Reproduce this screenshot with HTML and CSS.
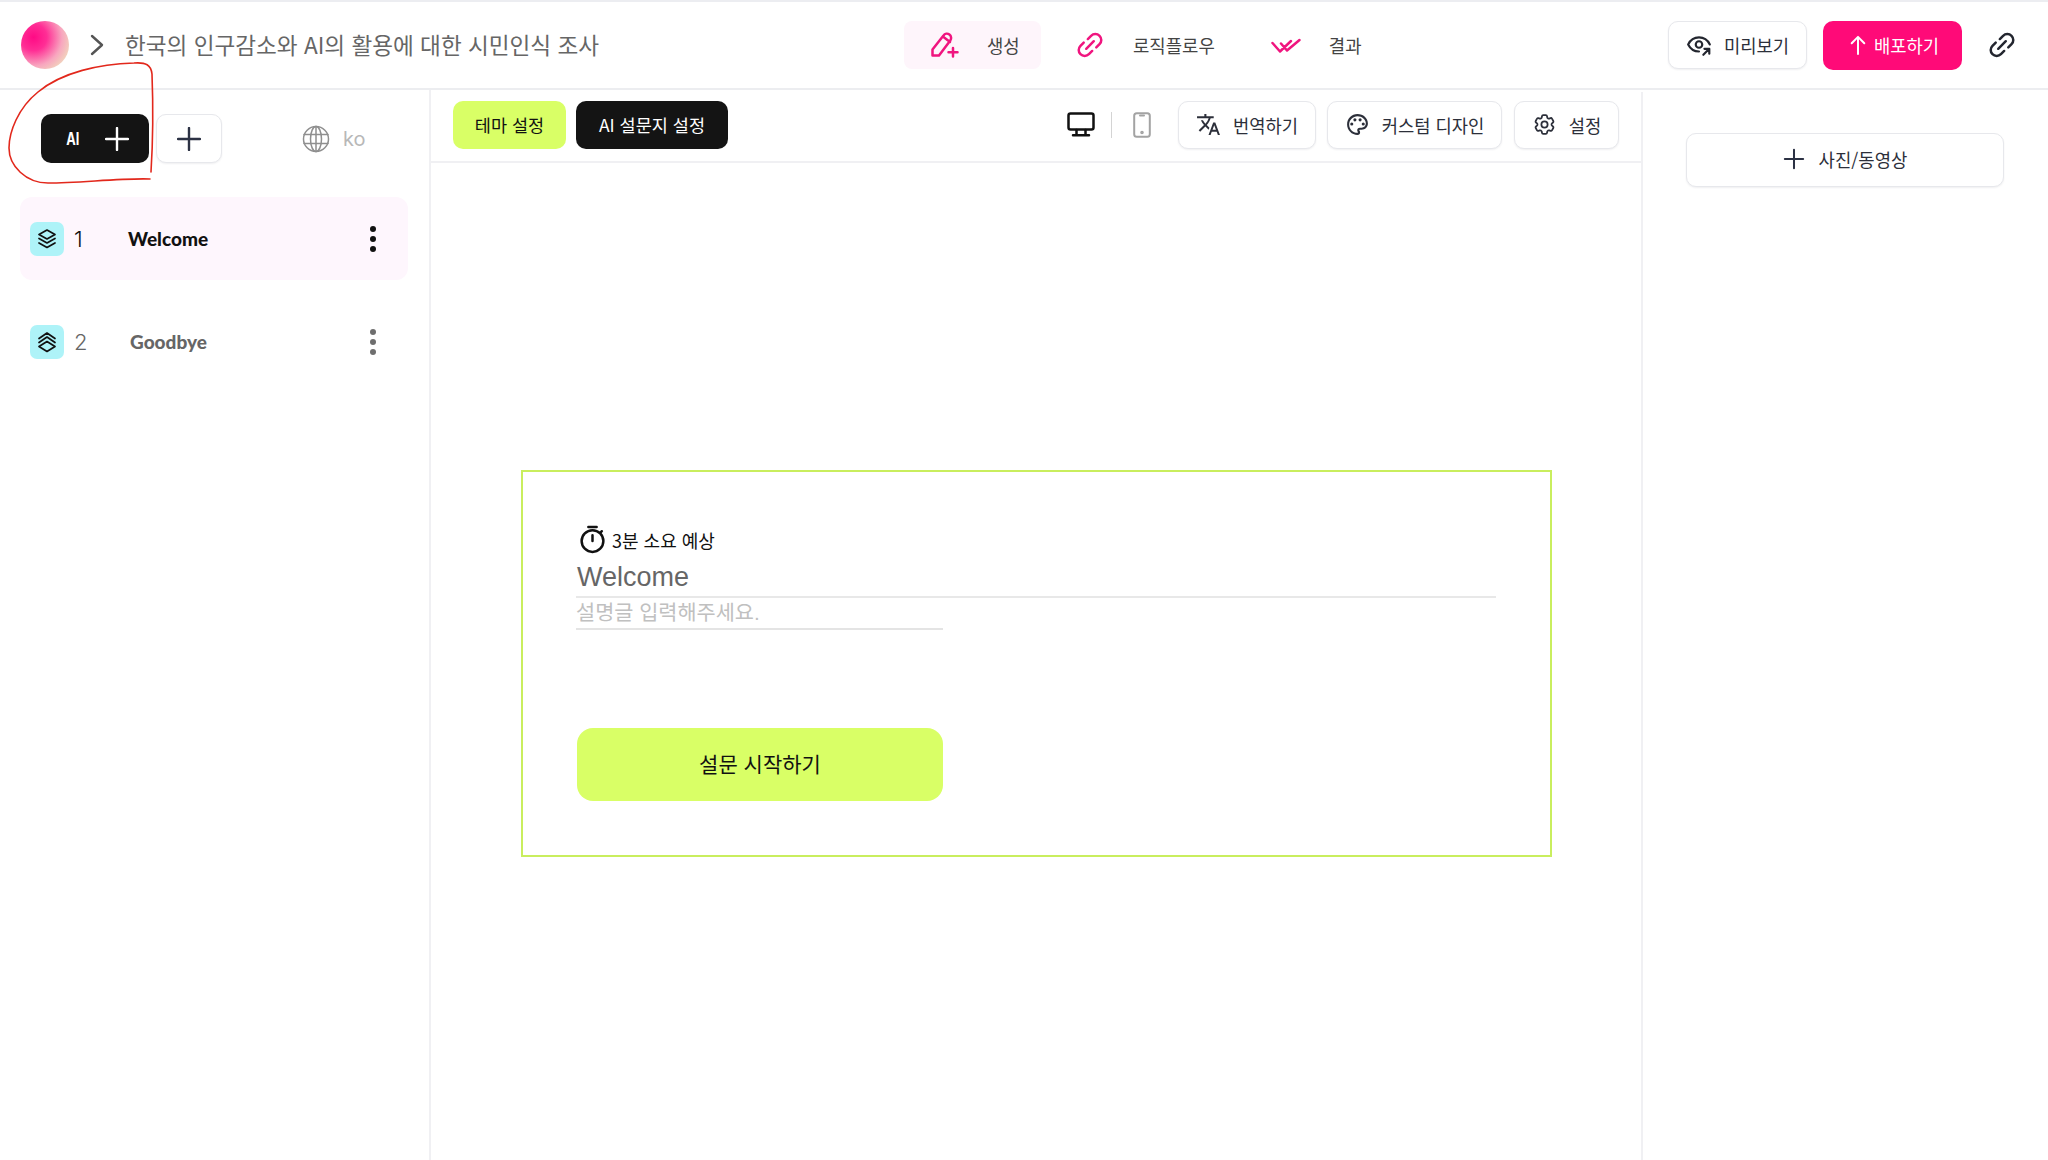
FILE: index.html
```html
<!DOCTYPE html>
<html lang="ko">
<head>
<meta charset="utf-8">
<title>설문 편집</title>
<link rel="stylesheet" href="styles.css">
</head>
<body>
<div class="app">
  <header class="topbar">
    <div class="brand">
      <div class="logo"></div>
      <svg class="chev" viewBox="0 0 14 24"><path d="M2 3l10 9-10 9"/></svg>
      <div class="title">한국의 인구감소와 AI의 활용에 대한 시민인식 조사</div>
    </div>
    <nav class="steps">
      <a class="step step-create">
        <svg class="ico-pencil" viewBox="0 0 28 26"><path d="M2 23.500V17.500L13 3.500a4.200 4.200 0 0 1 6.800 5L8.500 23.500zM13 5l6.500 5"/><path d="M22.500 16v8.500M18 20.200h9"/></svg>
        <span>생성</span>
      </a>
      <a class="step step-logic">
        <svg class="ico-link" viewBox="0 0 24 24"><path d="M10 6.500l3-3a5.500 5.500 0 0 1 7.800 7.800l-3 3M14 17.500l-3 3a5.500 5.500 0 0 1-7.800-7.800l3-3M8.500 15.500l7-7"/></svg>
        <span>로직플로우</span>
      </a>
      <a class="step step-result">
        <svg class="ico-check" viewBox="0 0 30 15"><path d="M1.500 5l7.500 8.500L20 3M10 5.500l6 7L28.500 2"/></svg>
        <span>결과</span>
      </a>
    </nav>
    <div class="actions">
      <button class="btn btn-preview">
        <svg class="ico-eye" viewBox="0 0 24 24"><path d="M2 11.500C4 7.500 7.500 5 12 5s8 2.500 10 6.500M2 11.500c2 4 5.500 6.500 10 6.500"/><circle cx="12" cy="11.500" r="3"/><path d="M16 21l5.500-5.500M17 15.500h4.500V20"/></svg>
        <span>미리보기</span>
      </button>
      <button class="btn-deploy">
        <svg class="ico-up" viewBox="0 0 20 24"><path d="M10 22V3M3 10l7-7 7 7"/></svg>
        <span>배포하기</span>
      </button>
      <svg class="ico-share" viewBox="0 0 24 24"><path d="M10 6.500l3-3a5.500 5.500 0 0 1 7.800 7.800l-3 3M14 17.500l-3 3a5.500 5.500 0 0 1-7.800-7.800l3-3M8.500 15.500l7-7"/></svg>
    </div>
  </header>

  <div class="workspace">
    <aside class="sidebar">
      <div class="side-top">
        <button class="btn-ai"><span class="ai-label">AI</span><svg class="ico-plus" viewBox="0 0 24 24"><path d="M12 1v22M1 12h22"/></svg></button>
        <button class="btn-add"><svg class="ico-plus" viewBox="0 0 24 24"><path d="M12 1v22M1 12h22"/></svg></button>
        <div class="lang">
          <svg class="ico-globe" viewBox="0 0 28 28"><circle cx="14" cy="14" r="12.500"/><ellipse cx="14" cy="14" rx="5.500" ry="12.500"/><path d="M14 1.500v25M2 9.500h24M2 18.500h24"/></svg>
          <span>ko</span>
        </div>
      </div>
      <ul class="pages">
        <li class="page page-active">
          <div class="badge"><svg viewBox="0 0 22 22"><path d="M11 2l8 4.500-8 4.500-8-4.500zM3 10.500l8 4.500 8-4.500M3 15l8 4.500 8-4.500"/></svg></div>
          <span class="num">1</span>
          <span class="page-name">Welcome</span>
          <span class="dots"><i></i><i></i><i></i></span>
        </li>
        <li class="page page-idle">
          <div class="badge"><svg viewBox="0 0 22 22"><path d="M3 7.500L11 2l8 5.500M3 11.500L11 6l8 5.500M11 10.500l8 5-8 5-8-5z"/></svg></div>
          <span class="num">2</span>
          <span class="page-name">Goodbye</span>
          <span class="dots"><i></i><i></i><i></i></span>
        </li>
      </ul>
    </aside>

    <main class="center">
      <div class="toolbar">
        <button class="btn-theme">테마 설정</button>
        <button class="btn-aiset">AI 설문지 설정</button>
        <div class="tools">
          <svg class="ico-monitor" viewBox="0 0 28 25"><rect x="1.500" y="1.500" width="25" height="16" rx="2"/><path d="M9.500 18v5M18.500 18v5M6 23.200h16"/></svg>
          <div class="tool-div"></div>
          <svg class="ico-phone" viewBox="0 0 18 26"><rect x="1.200" y="1.200" width="15.600" height="23.600" rx="2.500"/><path d="M7 3.500h4"/><circle cx="9" cy="20.500" r=".8"/></svg>
          <button class="btn btn-tool btn-translate">
            <svg class="ico-fill" viewBox="0 0 24 24"><path d="M12.870 15.070l-2.540-2.510.030-.030c1.740-1.940 2.980-4.170 3.710-6.530H17V4h-7V2H8v2H1v1.990h11.170C11.500 7.920 10.440 9.750 9 11.350 8.070 10.320 7.300 9.190 6.690 8h-2c.730 1.630 1.730 3.170 2.980 4.560l-5.090 5.020L4 19l5-5 3.110 3.110.760-2.040zM18.500 10h-2L12 22h2l1.120-3h4.750L21 22h2l-4.500-12zm-2.620 7l1.620-4.330L19.120 17h-3.240z"/></svg>
            <span>번역하기</span>
          </button>
          <button class="btn btn-tool btn-custom">
            <svg class="ico-fill" viewBox="0 0 24 24"><path d="M12 22C6.490 22 2 17.510 2 12S6.490 2 12 2s10 4.040 10 9c0 3.310-2.690 6-6 6h-1.770c-.280 0-.500.220-.500.500 0 .120.050.230.130.330.410.470.640 1.060.640 1.670A2.500 2.500 0 0 1 12 22zm0-18c-4.410 0-8 3.590-8 8s3.590 8 8 8c.280 0 .500-.220.500-.500a.540.540 0 0 0-.140-.350c-.410-.460-.630-1.050-.630-1.650a2.500 2.500 0 0 1 2.500-2.500H16c2.210 0 4-1.790 4-4 0-3.860-3.590-7-8-7z"/><circle cx="6.500" cy="11.500" r="1.500"/><circle cx="9.500" cy="7.500" r="1.500"/><circle cx="14.500" cy="7.500" r="1.500"/><circle cx="17.500" cy="11.500" r="1.500"/></svg>
            <span>커스텀 디자인</span>
          </button>
          <button class="btn btn-tool btn-settings">
            <svg class="ico-tool" viewBox="0 0 24 24"><path d="M9.594 3.940c.090-.542.560-.940 1.110-.940h2.593c.550 0 1.020.398 1.110.940l.213 1.281c.063.374.313.686.645.870.074.040.147.083.220.127.325.196.720.257 1.075.124l1.217-.456a1.125 1.125 0 0 1 1.370.490l1.296 2.247a1.125 1.125 0 0 1-.260 1.431l-1.003.827c-.293.241-.438.613-.430.992a7.723 7.723 0 0 1 0 .255c-.008.378.137.750.430.991l1.004.827c.424.350.534.955.260 1.430l-1.298 2.247a1.125 1.125 0 0 1-1.369.491l-1.217-.456c-.355-.133-.750-.072-1.076.124a6.470 6.470 0 0 1-.220.128c-.331.183-.581.495-.644.869l-.213 1.281c-.090.543-.560.940-1.110.940h-2.594c-.550 0-1.019-.398-1.110-.940l-.213-1.281c-.062-.374-.312-.686-.644-.870a6.520 6.520 0 0 1-.220-.127c-.325-.196-.720-.257-1.076-.124l-1.217.456a1.125 1.125 0 0 1-1.369-.490l-1.297-2.247a1.125 1.125 0 0 1 .260-1.431l1.004-.827c.292-.240.437-.613.430-.991a6.932 6.932 0 0 1 0-.255c.007-.380-.138-.751-.430-.992l-1.004-.827a1.125 1.125 0 0 1-.260-1.430l1.297-2.247a1.125 1.125 0 0 1 1.370-.491l1.216.456c.356.133.751.072 1.076-.124.072-.044.146-.086.220-.128.332-.183.582-.495.644-.869l.214-1.280Z"/><circle cx="12" cy="12" r="3"/></svg>
            <span>설정</span>
          </button>
        </div>
      </div>
      <div class="canvas">
        <section class="card">
          <div class="eta">
            <svg class="ico-timer" viewBox="0 0 24 28"><path d="M8 2h8M12 10v5.500M19.500 7.500l1.500-1.500"/><circle cx="12" cy="15.500" r="10.500"/></svg>
            <span>3분 소요 예상</span>
          </div>
          <div class="card-title">Welcome</div>
          <div class="card-desc">설명글 입력해주세요.</div>
          <button class="btn-start">설문 시작하기</button>
        </section>
      </div>
    </main>

    <aside class="rightbar">
      <button class="btn btn-media">
        <svg class="ico-plus-sm" viewBox="0 0 24 24"><path d="M12 2v20M2 12h20"/></svg>
        <span>사진/동영상</span>
      </button>
    </aside>
  </div>
  <svg class="annotation" viewBox="0 0 170 200"><path d="M151 172C153 140 153 100 152 74C151 65 146 62 134 63C100 64 62 72 38 92C18 108 9 132 9 148C9 166 26 183 48 183C80 183 120 178 150 179"/></svg>
</div>
</body>
</html>
```

FILE: styles.css
```css
* { box-sizing: border-box; }
html, body { margin: 0; padding: 0; background: #fff; }
body {
  font-family: "Noto Sans CJK KR", "Noto Sans", sans-serif;
  color: #222;
  width: 2048px;
  height: 1160px;
  overflow: hidden;
}
button { font-family: inherit; cursor: pointer; padding: 0; margin: 0; border: 0; background: none; }
svg { display: block; flex: none; fill: none; stroke-linecap: round; stroke-linejoin: round; }
ul { list-style: none; margin: 0; padding: 0; }

.app { position: relative; width: 2048px; height: 1160px; display: flex; flex-direction: column; border-top: 2px solid #ecedf1; }

/* top bar */
.topbar {
  height: 88px;
  flex: none;
  display: grid;
  grid-template-columns: 904px 458px 1fr;
  align-items: center;
  border-bottom: 2px solid #ecedf0;
}
.brand { display: flex; align-items: center; padding-left: 21px; }
.logo {
  width: 48px; height: 48px; border-radius: 50%;
  background: radial-gradient(circle at 26% 34%, #ff0a85 0%, #ff2e95 28%, #f8a6bf 60%, #efe4bc 88%);
}
.chev { width: 14px; height: 24px; margin-left: 21px; stroke: #555; stroke-width: 2.400; }
.title { margin-left: 21px; font-size: 22.600px; line-height: 32px; color: #666; white-space: nowrap; }

.steps { display: flex; align-items: center; height: 48px; font-size: 17.800px; color: #444; }
.step { display: flex; align-items: center; height: 48px; }
.step-create { width: 137px; padding-left: 26px; background: #fef5fb; border-radius: 8px; }
.step-create span { margin-left: 28px; }
.ico-pencil { width: 29px; height: 26px; stroke: #f0157f; stroke-width: 2.500; }
.step-logic { margin-left: 36px; }
.ico-link { width: 26px; height: 26px; stroke: #f0157f; stroke-width: 2.300; }
.step-logic span { margin-left: 30px; }
.step-result { margin-left: 56px; }
.ico-check { width: 30px; height: 15px; stroke: #f0157f; stroke-width: 2.500; }
.step-result span { margin-left: 28px; }

.actions { display: flex; align-items: center; justify-content: flex-end; padding-right: 33px; }
.btn {
  display: flex; align-items: center; justify-content: center;
  background: #fff; border: 1px solid #e7e8ec; border-radius: 10px;
  box-shadow: 0 1px 2px rgba(30, 35, 60, .07);
  color: #2c2f3a;
  font-size: 17.700px;
}
.btn-preview { width: 139px; height: 48px; gap: 12px; }
.ico-eye { width: 26px; height: 26px; stroke: #23262f; stroke-width: 2; }
.btn-deploy {
  width: 139px; height: 49px; margin-left: 16px; padding-left: 3px;
  display: flex; align-items: center; justify-content: center; gap: 7px;
  background: #ff0a78; color: #fff; border-radius: 10px; font-size: 17.700px;
}
.ico-up { width: 18px; height: 22px; stroke: #fff; stroke-width: 2.200; }
.ico-share { width: 26px; height: 26px; margin-left: 27px; stroke: #23262f; stroke-width: 2.300; }

/* workspace */
.workspace { flex: 1; display: flex; min-height: 0; }

.sidebar { width: 431px; flex: none; border-right: 2px solid #f0f0f3; }
.side-top { display: flex; align-items: center; padding: 24px 0 0 41px; height: 73px; }
.btn-ai {
  width: 108px; height: 49px; border-radius: 10px; background: #141414; color: #fff;
  display: flex; align-items: center; justify-content: space-between; padding: 0 20px 0 23px;
}
.ai-label { display: inline-block; font-family: "Inter", sans-serif; font-size: 17px; font-weight: 700; transform: scaleX(.75); }
.btn-ai .ico-plus { stroke: #fff; }
.ico-plus { width: 24px; height: 24px; stroke: #2c3244; stroke-width: 2.400; }
.btn-add {
  width: 66px; height: 49px; margin-left: 7px; border-radius: 10px; background: #fff;
  border: 1px solid #e7e8ec; box-shadow: 0 1px 2px rgba(30,35,60,.07);
  display: flex; align-items: center; justify-content: center;
}
.lang { display: flex; align-items: center; margin-left: 80px; color: #b8b8b8; font-family: "Inter", sans-serif; font-size: 20px; }
.lang span { margin-left: 13px; }
.ico-globe { width: 28px; height: 28px; stroke: #8f8f8f; stroke-width: 1.500; }

.pages { padding: 34px 21px 0 20px; }
.page { display: flex; align-items: center; height: 83px; border-radius: 12px; padding-left: 10px; position: relative; }
.page-active { background: #fef6fd; color: #111; }
.page-idle { margin-top: 20px; color: #666; }
.badge { width: 34px; height: 34px; border-radius: 7px; background: #aef3f8; display: flex; align-items: center; justify-content: center; flex: none; }
.badge svg { width: 22px; height: 22px; stroke: #111; stroke-width: 1.700; }
.num { font-family: "Inter", sans-serif; font-size: 22px; font-weight: 300; margin-left: 10px; width: 54px; }
.page-name { font-family: "Lato", sans-serif; font-size: 19px; font-weight: 900; flex: 1; }
.page-idle .page-name { padding-left: 2px; }
.dots { display: flex; flex-direction: column; gap: 4px; width: 6px; margin-right: 32px; }
.dots i { display: block; width: 6px; height: 6px; border-radius: 50%; background: #111; }
.page-idle .dots i { background: #6e6e6e; }

/* center */
.center { flex: 1; min-width: 0; display: flex; flex-direction: column; }
.toolbar {
  height: 73px; flex: none; display: flex; align-items: center;
  padding: 0 23px 2px 22px;
  border-bottom: 2px solid #f0f0f3;
}
.btn-theme { width: 113px; height: 48px; border-radius: 10px; background: #d9ff66; color: #111; font-size: 17.500px; }
.btn-aiset { width: 152px; height: 48px; margin-left: 10px; border-radius: 10px; background: #141414; color: #fff; font-size: 17.500px; }
.tools { margin-left: auto; display: flex; align-items: center; }
.ico-monitor { width: 28px; height: 25px; stroke: #111; stroke-width: 2.500; }
.tool-div { width: 1px; height: 26px; background: #d4d4d4; margin: 0 21px 0 16px; }
.ico-phone { width: 18px; height: 26px; stroke: #a3a3a3; stroke-width: 2; }
.btn-tool { height: 48px; gap: 12px; }
.btn-translate { width: 138px; margin-left: 27px; }
.btn-custom { width: 175px; margin-left: 11px; }
.btn-settings { width: 105px; margin-left: 12px; }
.ico-tool { width: 25px; height: 25px; stroke: #2c2f3a; stroke-width: 1.700; }
.ico-fill { width: 25px; height: 25px; fill: #2c2f3a; stroke: none; }

.canvas { flex: 1; display: flex; justify-content: center; align-items: flex-start; padding-top: 307px; }
.card {
  width: 1031px; height: 387px;
  border: 2px solid #c9ee5e;
  padding: 53px 53px 0 53px;
  display: flex; flex-direction: column; align-items: flex-start;
}
.eta { display: flex; align-items: center; gap: 7px; margin-left: 4px; height: 29px; font-size: 18px; color: #111; }
.ico-timer { width: 25px; height: 29px; stroke: #111; stroke-width: 2.400; }
.card-title {
  width: 920px; height: 44px; padding-left: 1px;
  font-family: "Liberation Sans", sans-serif; font-size: 27px; line-height: 46px; color: #666;
  border-bottom: 2px solid #e8e8e8;
}
.card-desc {
  width: 367px; height: 32px;
  font-size: 20.800px; line-height: 30px; color: #c0c0c0; font-family: "Liberation Sans", "Noto Sans CJK KR", sans-serif;
  border-bottom: 2px solid #e4e4e4;
}
.btn-start {
  width: 366px; height: 73px; margin-top: 98px; margin-left: 1px; padding-bottom: 3px;
  background: #d9ff66; border-radius: 16px; color: #111; font-size: 21px;
}

/* right */
.rightbar { width: 407px; flex: none; padding: 41px 0 0 43px; margin-top: 2px; border-left: 2px solid #f0f0f3; margin-left: -1px; }
.btn-media { width: 318px; height: 54px; gap: 14px; padding-bottom: 2px; font-size: 17.800px; }
.ico-plus-sm { width: 22px; height: 22px; stroke: #2c3244; stroke-width: 2.200; }

/* hand-drawn note over the page */
.annotation { position: absolute; left: 0; top: -2px; width: 170px; height: 200px; fill: none; stroke: #e2281c; stroke-width: 1.600; }
```
